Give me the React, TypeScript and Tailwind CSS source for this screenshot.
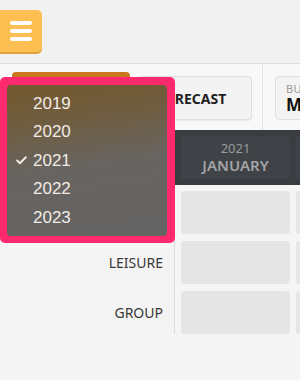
import { Check } from "lucide-react";

const years = ["2019", "2020", "2021", "2022", "2023"];
const rows = ["TRANSIENT", "LEISURE", "GROUP"];

export default function App() {
  return (
    <div className="relative w-[300px] h-[380px] overflow-hidden bg-[#f5f5f5] font-['Noto_Sans',sans-serif]">
      <header className="h-16 bg-[#f1f1f1] border-b border-[#dedede] flex items-center">
        <button className="w-[42px] h-[42px] -mt-[1px] bg-[#fdbf52] rounded-r-[5px] shadow-[0_2px_0_#dfa23c] flex flex-col items-center justify-center gap-[3.5px]">
          <span className="w-[22px] h-[4.5px] rounded-full bg-white" />
          <span className="w-[22px] h-[4.5px] rounded-full bg-white" />
          <span className="w-[22px] h-[4.5px] rounded-full bg-white" />
        </button>
      </header>

      <div className="h-[66px] flex items-start bg-[#f8f8f8]">
        <div className="ml-3 mt-[8px] w-[118px] h-[44px] shrink-0 rounded-[4px] bg-[#c9781e]" />
        <button className="ml-[9px] mt-3 w-[113px] h-[44px] shrink-0 pl-[16px] text-left rounded-[4px] bg-[#f3f3f3] border border-[#dfdfdf] shadow-[0_1px_1px_rgba(0,0,0,0.06)] text-[14px] font-bold text-[#222]">
          FORECAST
        </button>
        <div className="ml-[10px] w-px h-full shrink-0 bg-[#e2e2e2]" />
        <button className="ml-3 mt-3 w-[90px] h-[44px] pl-[10px] text-left rounded-[4px] bg-[#f3f3f3] border border-[#dfdfdf] flex flex-col justify-center shrink-0">
          <span className="text-[11px] leading-[13px] text-[#9a9a9a] tracking-wide">BUDGET</span>
          <span className="text-[17px] leading-[20px] font-bold text-[#111]">March</span>
        </button>
      </div>

      <div className="flex">
        <div className="w-[175px] shrink-0 border-r border-[#dcdcdc] bg-[#f4f4f4]">
          <div className="h-[55px]" />
          <div className="pt-[6px] flex flex-col gap-[7px]">
            {rows.map((r) => (
              <div
                key={r}
                className="h-[43px] flex items-center justify-end pr-[11px] text-[14px] text-[#383838]"
              >
                {r}
              </div>
            ))}
          </div>
        </div>
        <div className="flex-1 min-w-0 overflow-hidden">
          <div className="h-[55px] bg-[#393c40] flex gap-[6px] pl-[6px] pt-[6px]">
            <div className="w-[109px] h-[43px] shrink-0 rounded-[3px] bg-[#3f4246] flex flex-col items-center justify-center">
              <span className="text-[13px] leading-[15px] text-[#999b9d]">2021</span>
              <span className="text-[15px] leading-[18px] font-semibold text-[#a3a4a6]">JANUARY</span>
            </div>
            <div className="w-[109px] h-[43px] shrink-0 rounded-[3px] bg-[#3f4246]" />
          </div>
          <div className="pt-[6px] pl-[6px] flex flex-col gap-[7px]">
            {rows.map((r) => (
              <div key={r} className="flex gap-[6px]">
                <div className="w-[109px] h-[43px] shrink-0 rounded-[3px] bg-[#e6e6e6]" />
                <div className="w-[109px] h-[43px] shrink-0 rounded-[3px] bg-[#e6e6e6]" />
              </div>
            ))}
          </div>
        </div>
      </div>

      <div className="absolute left-0 top-[77px] w-[175px] h-[166px] rounded-[5px] bg-[#ff2a6d] pt-[8px] pl-[7px] pr-[8px] pb-[7px]">
        <div className="h-full rounded-[4px] bg-[linear-gradient(172deg,#73582c_0%,#6f5e44_28%,#686460_52%,#646464_100%)] pt-[4px]">
          {years.map((y) => (
            <div key={y} className="relative h-[28.5px] flex items-center pl-[26px] text-[17px] text-[#f1ece6] font-['Liberation_Sans',sans-serif]">
              {y === "2021" && (
                <Check className="absolute left-[8px] w-[13px] h-[13px] text-[#f1ece6]" strokeWidth={3.5} />
              )}
              {y}
            </div>
          ))}
        </div>
      </div>
    </div>
  );
}
